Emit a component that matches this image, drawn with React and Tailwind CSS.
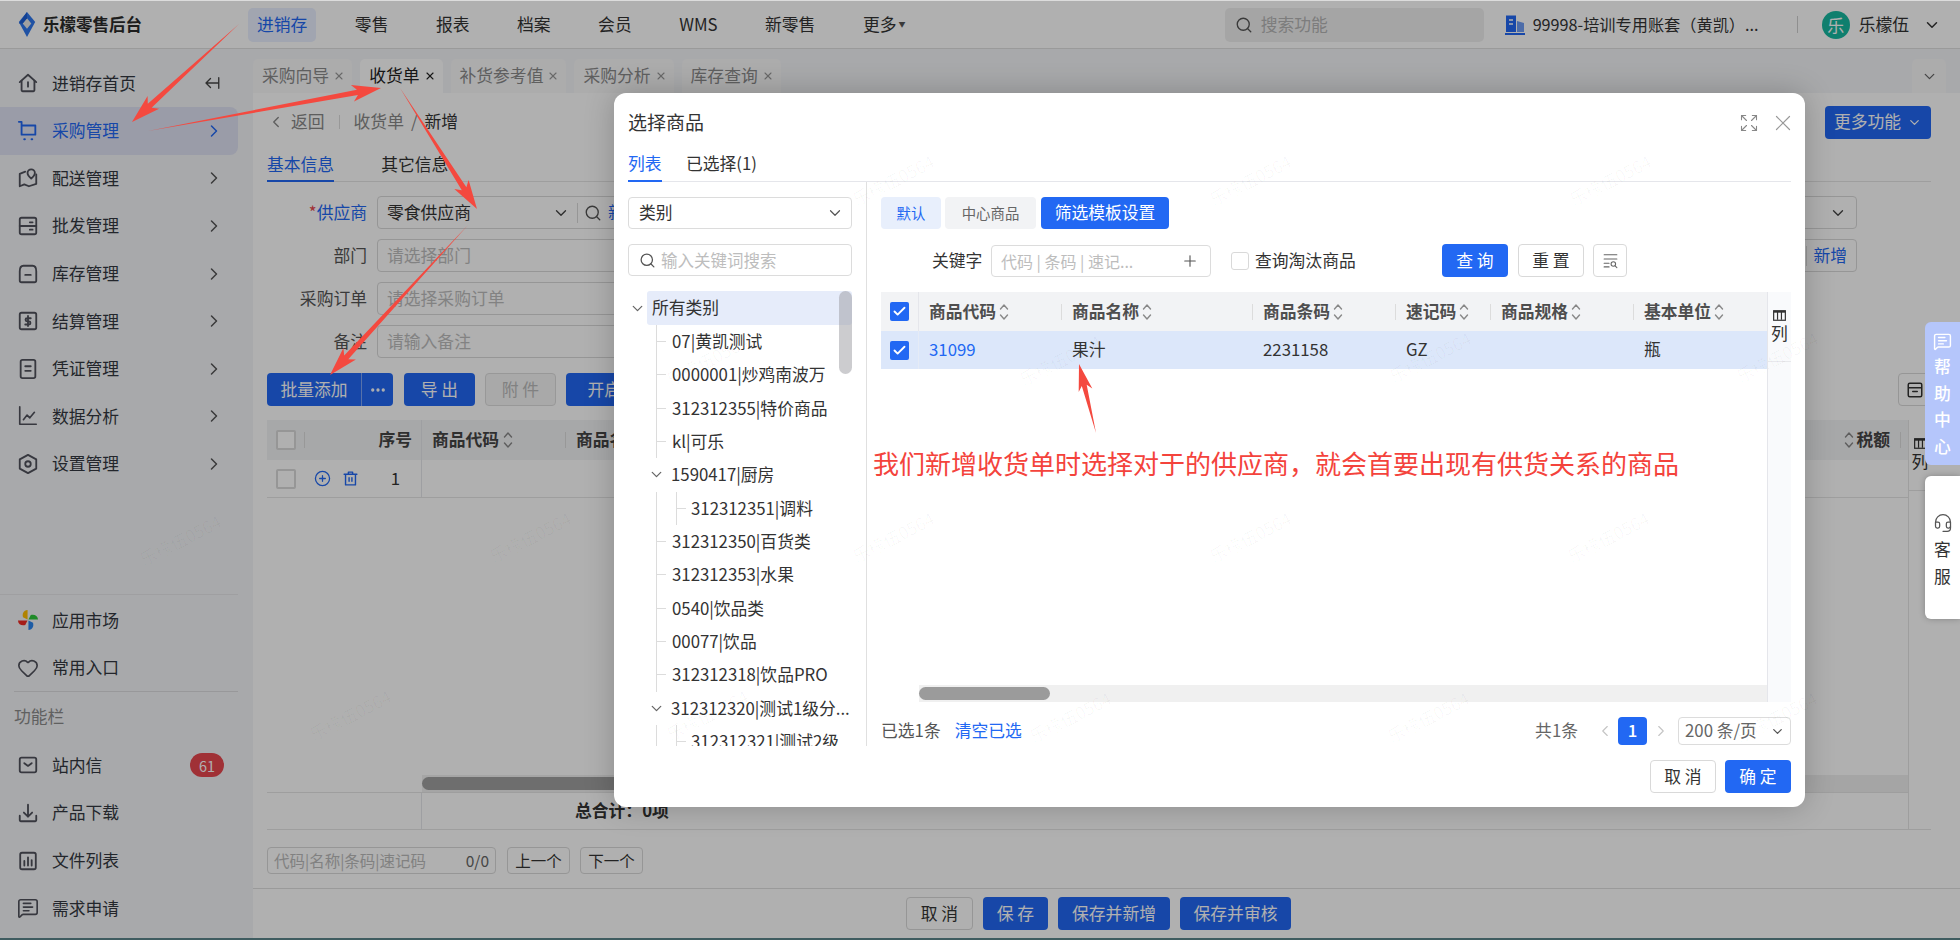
import React from "react";
import { Check, X, ChevronDown, ChevronRight, ChevronLeft, Search, Plus, Heart, Expand, CirclePlus, Headset, MessageSquareText, Ellipsis } from "lucide-react";

const FONT = { fontFamily: '"Noto Sans CJK SC", sans-serif' };

function Svg({ children, className = "", sw = 2, vb = "0 0 24 24" }) {
  return (
    <svg viewBox={vb} fill="none" stroke="currentColor" strokeWidth={sw} strokeLinecap="round" strokeLinejoin="round" className={className}>
      {children}
    </svg>
  );
}
const cls = "w-[22px] h-[22px]";
const HomeI = () => <Svg className={cls}><path d="M3 11 12 3l9 8" /><path d="M5 9.5V20a1 1 0 0 0 1 1h12a1 1 0 0 0 1-1V9.5" /><path d="M12 11v5" /></Svg>;
const CartI = () => <Svg className={cls}><path d="M2 2h3v14h15V6H5" /><path d="M8 21h.5M16 21h.5" strokeWidth="2.4" /></Svg>;
const MapI = () => <Svg className={cls}><path d="M9 5 3 7.5V21l5-2 5 2 8-2.5V8" /><path d="M15.5 2.5a4 4 0 0 1 4 4c0 2.5-4 6-4 6s-4-3.5-4-6a4 4 0 0 1 4-4z" /></Svg>;
const WholesaleI = () => <Svg className={cls}><rect x="3" y="3" width="18" height="18" rx="2" /><path d="M3 12h18M14 8h3M14 16h3" /></Svg>;
const StockI = () => <Svg className={cls}><path d="M3 9c0-3 1-6 4-6h10c3 0 4 3 4 6v10a2 2 0 0 1-2 2H5a2 2 0 0 1-2-2z" /><path d="M9 13h6" /></Svg>;
const MoneyI = () => <Svg className={cls}><rect x="3" y="3" width="18" height="18" rx="2" /><path d="M12 6.5v11M15 9h-4a1.7 1.7 0 0 0 0 3.4h2a1.7 1.7 0 0 1 0 3.4H9" /></Svg>;
const VoucherI = () => <Svg className={cls}><rect x="4" y="2" width="16" height="20" rx="2" /><path d="M9 9h6M9 14h6" /></Svg>;
const ChartI = () => <Svg className={cls} sw={1.8}><path d="M3 2v19h18" /><path d="m7 16 4-5 3 3 5-6" /></Svg>;
const SetI = () => <Svg className={cls}><path d="m12 2 9 5v10l-9 5-9-5V7z" /><circle cx="12" cy="12" r="3" /></Svg>;
const MailI = () => <Svg className={cls}><rect x="3" y="4" width="18" height="16" rx="2" /><path d="m8 10 4 3 4-3" /></Svg>;
const DownI = () => <Svg className={cls}><path d="M3 15v5a1 1 0 0 0 1 1h16a1 1 0 0 0 1-1v-5" /><path d="M12 3v13M7.5 11.5 12 16l4.500-4.500" /></Svg>;
const FileI = () => <Svg className={cls}><rect x="3.500" y="3" width="17" height="18" rx="2" /><path d="M8 12v5M12 8v9M16 11v6" /></Svg>;
const Pinwheel = () => (
  <svg viewBox="0 0 24 24" className={cls}>
    <path d="M11.500 11.500V1C7 1.500 5.500 5 6.500 9z" fill="#ffbe00" />
    <path d="M12.500 11.500H23C22.500 7 19 5.500 15 6.500z" fill="#2ec93a" />
    <path d="M12.500 12.500V23C17 22.500 18.500 19 17.500 15z" fill="#2b86f0" />
    <path d="M11.500 12.500H1C1.500 17 5 18.500 9 17.500z" fill="#f02b25" />
  </svg>
);

function Logo() {
  return (
    <svg viewBox="0 0 18 26" className="w-[18px] h-[25px] shrink-0">
      <path d="M9 0 17.500 10.500 9 26 .5 10.500z" fill="#2f78ee" />
      <path d="M9 6.500 13.500 12 9 17.500 4.500 12z" fill="#e8e8e8" />
      <path d="M9 0 9 6.500 4.500 12H.5z" fill="#1d5fd6" />
    </svg>
  );
}

function SortI({ className = "" }) {
  return (
    <svg viewBox="0 0 10 18" className={`w-[10px] h-[18px] shrink-0 ${className}`} fill="none" stroke="currentColor" strokeWidth="1.400" strokeLinecap="round" strokeLinejoin="round">
      <path d="M1.500 6 5 2l3.500 4M1.500 12 5 16l3.500-4" />
    </svg>
  );
}

function ColsI({ className = "" }) {
  return (
    <svg viewBox="0 0 12 10" className={`w-[13px] h-[11px] ${className}`} fill="none" stroke="currentColor" strokeWidth="1.100">
      <rect x=".6" y=".6" width="10.800" height="8.800" />
      <path d="M.6 1.500h10.800" strokeWidth="1.800" />
      <path d="M4.200 1v8M7.800 1v8" />
    </svg>
  );
}

function arrowPoints(x1, y1, x2, y2, neck = 5.5, head = 17, len = 26) {
  const L = Math.hypot(x2 - x1, y2 - y1);
  const dx = (x2 - x1) / L, dy = (y2 - y1) / L;
  const nx = -dy, ny = dx;
  const bx = x2 - dx * len, by = y2 - dy * len;
  const back = 3;
  const p = [
    [x1, y1],
    [bx + nx * neck / 2 + dx * 2, by + ny * neck / 2 + dy * 2],
    [bx + nx * head / 2 - dx * back, by + ny * head / 2 - dy * back],
    [x2, y2],
    [bx - nx * head / 2 - dx * back, by - ny * head / 2 - dy * back],
    [bx - nx * neck / 2 + dx * 2, by - ny * neck / 2 + dy * 2],
  ];
  return p.map((q) => q.map((v) => v.toFixed(1)).join(",")).join(" ");
}

const ARROWS = [
  [239, 24, 132, 122],
  [148, 131, 381, 88],
  [400, 88, 477, 209],
  [468, 225, 330, 375],
  [1096, 433, 1079, 364],
];

const MARKS = [
  [893, 180], [1250, 180], [1610, 180],
  [707, 360], [1060, 360], [1430, 357], [1777, 357],
  [180, 540], [530, 537], [893, 537], [1250, 537], [1608, 537],
  [350, 715], [707, 715], [1070, 717], [1428, 717], [1776, 717],
];

const NAV = ["零售", "报表", "档案", "会员", "WMS", "新零售"];

const SIDE = [
  [HomeI, "进销存首页"],
  [CartI, "采购管理"],
  [MapI, "配送管理"],
  [WholesaleI, "批发管理"],
  [StockI, "库存管理"],
  [MoneyI, "结算管理"],
  [VoucherI, "凭证管理"],
  [ChartI, "数据分析"],
  [SetI, "设置管理"],
];

function SideItem({ icon: I, label, active, chevron, right }) {
  return (
    <div className={`flex items-center h-[47.600px] w-[238px] pl-[17px] pr-[14px] rounded-r-[8px] ${active ? "bg-[#dfe3f3] text-[#2268f3]" : "text-[#333840]"}`}>
      <span className={active ? "text-[#2268f3]" : "text-[#50525c]"}><I /></span>
      <span className="ml-[13px] text-[16.800px]">{label}</span>
      <span className="ml-auto flex items-center">
        {chevron && <ChevronRight className={`w-[20px] h-[20px] ${active ? "text-[#2268f3]" : "text-[#555]"}`} strokeWidth={1.800} />}
        {right}
      </span>
    </div>
  );
}

function Sidebar() {
  return (
    <aside className="w-[253px] shrink-0 bg-[#f4f5f8] flex flex-col pt-[10.500px]">
      {SIDE.map(([I, label], i) => (
        <SideItem
          key={label}
          icon={I}
          label={label}
          active={i === 1}
          chevron={i > 0}
          right={i === 0 ? (
            <Svg className="w-[18px] h-[18px] text-[#444] mr-[3px]" sw={1.800}><path d="M21 12H5M10 6l-6 6 6 6M21 5v14" /></Svg>
          ) : null}
        />
      ))}
      <div className="mt-auto w-[238px] border-t border-[#e6e7ea]" />
      <div className="pt-[1px]">
        <SideItem icon={Pinwheel} label="应用市场" />
        <SideItem icon={() => <Heart className={cls} strokeWidth={1.800} />} label="常用入口" />
      </div>
      <div className="ml-[14px] w-[224px] border-t border-[#dcdde0] mt-[-1px]" />
      <div className="h-[50px] pl-[14px] flex items-center text-[16.800px] text-[#8c8c8c]">功能栏</div>
      <SideItem
        icon={MailI}
        label="站内信"
        right={<span className="w-[34px] h-[24px] rounded-full bg-[#e8474f] text-white text-[14.400px] flex items-center justify-center">61</span>}
      />
      <SideItem icon={DownI} label="产品下载" />
      <SideItem icon={FileI} label="文件列表" />
      <SideItem icon={() => <MessageSquareText className={cls} strokeWidth={1.800} />} label="需求申请" />
      <div className="h-[6px]" />
    </aside>
  );
}

function Header() {
  return (
    <header className="h-[48px] shrink-0 flex items-center bg-white border-b border-[#dfdfdf] text-[16.800px] text-[#333]">
      <div className="w-[248px] shrink-0 flex items-center pl-[18px] gap-[7px]">
        <Logo />
        <span className="font-bold text-[16.500px] text-[#2b2b2b]">乐檬零售后台</span>
      </div>
      <nav className="flex items-center gap-[29.500px]">
        <span className="h-[34px] px-[9px] rounded-[5px] bg-[#e9efff] text-[#2268f3] flex items-center">进销存</span>
        {NAV.map((n) => (
          <span key={n} className="px-[9px]">{n}</span>
        ))}
        <span className="pl-[9px] flex items-center gap-[2px]">更多<span className="text-[7px] text-[#555]">▼</span></span>
      </nav>
      <div className="ml-auto flex items-center pr-[19px]">
        <div className="w-[259px] h-[34px] rounded-[5px] bg-[#f0f0f0] flex items-center pl-[10px] text-[#b5b5b5]">
          <Search className="w-[18px] h-[18px] text-[#555]" strokeWidth={1.800} />
          <span className="ml-[8px]">搜索功能</span>
        </div>
        <svg viewBox="0 0 22 22" className="ml-[20px] w-[22px] h-[22px]">
          <path d="M2 1.500h10V18H2z" fill="#2268f3" />
          <path d="M13 7l7 2v9h-7z" fill="#6f9df5" />
          <path d="M1 19h20v2H1z" fill="#2268f3" />
          <path d="M5 6h4M5 10h4" stroke="#fff" strokeWidth="1.500" />
        </svg>
        <span className="ml-[7px] w-[232px] whitespace-nowrap overflow-hidden text-[16.200px]">99998-培训专用账套（黄凯）...</span>
        <span className="ml-[32px] w-px h-[17px] bg-[#d0d0d0]" />
        <span className="ml-[24px] w-[28px] h-[28px] rounded-full bg-[#17b8a0] text-white flex items-center justify-center text-[17px]">乐</span>
        <span className="ml-[9px]">乐檬伍</span>
        <ChevronDown className="ml-[14px] w-[18px] h-[18px] text-[#333]" strokeWidth={2} />
      </div>
    </header>
  );
}

function TabItem({ label, active }) {
  return (
    <div className={`h-full flex items-center pl-[9px] pr-[7px] gap-[4px] rounded-t-[5px] ${active ? "bg-white text-[#222]" : "bg-[#f9f9fa] text-[#8a8a8a]"}`}>
      <span>{label}</span>
      <X className={`w-[12px] h-[12px] ${active ? "text-[#222]" : "text-[#999]"}`} strokeWidth={2.200} />
    </div>
  );
}

function Field({ label, children, required, blue }) {
  return (
    <div className="flex items-center">
      <label className={`w-[100px] text-right mr-[10px] ${blue ? "text-[#2268f3]" : "text-[#555]"}`}>
        {required && <span className="text-[#e8474f]">*</span>}
        {label}
      </label>
      {children}
    </div>
  );
}

function Input({ placeholder, children, className = "w-[430px]" }) {
  return (
    <div className={`h-[33px] border border-[#d9d9d9] rounded-[4px] bg-white flex items-center px-[9px] ${className}`}>
      {placeholder && <span className="text-[#bdbdbd]">{placeholder}</span>}
      {children}
    </div>
  );
}

function Btn({ children, className = "" }) {
  return <button className={`h-[33px] rounded-[4px] flex items-center justify-center ${className}`}>{children}</button>;
}

function PageBody() {
  return (
    <main className="flex-1 min-w-0 flex flex-col bg-white text-[16.800px]">
      <div className="h-[44px] shrink-0 bg-[#f4f5f8] pt-[10px] flex gap-[8px] relative">
        <TabItem label="采购向导" />
        <TabItem label="收货单" active />
        <TabItem label="补货参考值" />
        <TabItem label="采购分析" />
        <TabItem label="库存查询" />
        <div className="ml-auto mr-[14px] w-[34px] bg-[#f9f9fa] rounded-t-[5px] flex items-center justify-center">
          <ChevronDown className="w-[17px] h-[17px] text-[#666]" strokeWidth={1.800} />
        </div>
      </div>

      <div className="flex-1 min-h-0 flex flex-col pl-[14px] pr-[29px]">
        <div className="h-[58px] shrink-0 flex items-center text-[#888]">
          <ChevronLeft className="w-[18px] h-[18px] mr-[6px]" strokeWidth={1.800} />
          <span>返回</span>
          <span className="mx-[14px] w-px h-[14px] bg-[#ddd]" />
          <span>收货单</span>
          <span className="mx-[7px]">/</span>
          <span className="text-[#333]">新增</span>
          <Btn className="ml-auto w-[106px] h-[28px] bg-[#2268f3] text-white gap-[6px]">更多功能<ChevronDown className="w-[15px] h-[15px]" /></Btn>
        </div>
        <div className="h-[31px] shrink-0 flex border-b border-[#e5e5e5]">
          <span className="text-[#2268f3] border-b-2 border-[#2268f3] h-[31px] leading-[26px] whitespace-nowrap">基本信息</span>
          <span className="ml-[47px] text-[#333] leading-[26px] whitespace-nowrap">其它信息</span>
        </div>

        <div className="mt-[14px] flex flex-col gap-[10px]">
          <div className="flex justify-between w-[1590px]">
            <Field label="供应商" required blue>
              <Input>
                <span className="text-[#333] whitespace-nowrap">零食供应商</span>
                <ChevronDown className="ml-[81px] w-[18px] h-[18px] text-[#444]" strokeWidth={1.800} />
                <span className="ml-[7px] w-px h-[20px] bg-[#d9d9d9]" />
                <Search className="ml-[6px] w-[18px] h-[18px] text-[#555]" strokeWidth={1.800} />
                <span className="ml-[6px] text-[#2268f3] whitespace-nowrap">新增</span>
              </Input>
            </Field>
            <Field label="仓库">
              <Input className="w-[380px] justify-end"><ChevronDown className="w-[18px] h-[18px] text-[#444]" strokeWidth={1.800} /></Input>
            </Field>
          </div>
          <div className="flex justify-between w-[1590px]">
            <Field label="部门"><Input placeholder="请选择部门" /></Field>
            <Field label="业务员">
              <Input className="w-[380px] justify-end">
                <span className="w-px h-[20px] bg-[#d9d9d9] mr-[6px]" />
                <span className="text-[#2268f3] whitespace-nowrap">新增</span>
              </Input>
            </Field>
          </div>
          <Field label="采购订单"><Input placeholder="请选择采购订单" /></Field>
          <Field label="备注"><Input placeholder="请输入备注" /></Field>
        </div>

        <div className="mt-[15px] h-[33px] shrink-0 flex items-center">
          <div className="flex bg-[#2268f3] rounded-[4px] text-white h-[33px] items-center">
            <span className="w-[94px] text-center">批量添加</span>
            <span className="w-px h-full bg-[#7ea6f7]" />
            <span className="w-[31px] flex justify-center"><Ellipsis className="w-[18px] h-[18px]" strokeWidth={2.400} /></span>
          </div>
          <Btn className="ml-[11px] w-[71px] bg-[#2268f3] text-white">导 出</Btn>
          <Btn className="ml-[10px] w-[71px] border border-[#ddd] bg-[#f5f5f5] text-[#bbb]">附 件</Btn>
          <Btn className="ml-[10px] w-[110px] bg-[#2268f3] text-white">开启扫码</Btn>
          <Btn className="ml-auto w-[33px] border border-[#d9d9d9] bg-white text-[#333]">
            <Svg className="w-[18px] h-[18px]" sw={2}><path d="M3 9V5a2 2 0 0 1 2-2h14a2 2 0 0 1 2 2v4M3 9v10a2 2 0 0 0 2 2h14a2 2 0 0 0 2-2V9zM9 14h6" /></Svg>
          </Btn>
        </div>

        <div className="mt-[14px] h-[410px] shrink-0 flex">
          <div className="flex-1 min-w-0 flex flex-col">
            <div className="h-[40px] shrink-0 bg-[#f2f3f5] flex items-center font-bold text-[#444]">
              <div className="w-[155px] h-full shrink-0 flex items-center pl-[9px] border-r border-[#e5e6eb]">
                <span className="w-[20px] h-[20px] border-2 border-[#d9d9d9] rounded-[2px] bg-white" />
                <span className="ml-[8px] w-px h-[16px] bg-[#ddd]" />
                <span className="ml-auto mr-[9px]">序号</span>
              </div>
              <div className="w-[143px] pl-[10px] flex items-center gap-[4px]">商品代码<SortI className="text-[#888]" /></div>
              <span className="w-px h-[16px] bg-[#ddd]" />
              <span className="ml-[10px]">商品名称</span>
              <div className="ml-auto flex items-center gap-[2px]">
                <SortI className="text-[#888]" />
                <span>税额</span>
                <span className="ml-[8px] w-px h-[16px] bg-[#ddd] mr-[7px]" />
              </div>
            </div>
            <div className="h-[38px] shrink-0 flex items-center border-b border-[#e5e5e5]">
              <div className="w-[155px] h-full shrink-0 flex items-center pl-[9px] border-r border-[#e5e6eb]">
                <span className="w-[20px] h-[20px] border-2 border-[#d9d9d9] rounded-[2px] bg-white" />
                <CirclePlus className="ml-[18px] w-[17px] h-[17px] text-[#2268f3]" strokeWidth={1.800} />
                <Svg className="ml-[11px] w-[17px] h-[17px] text-[#2268f3]"><path d="M3 6h18M9 6V3h6v3M5 6v15h14V6M10 11v5M14 11v5" /></Svg>
                <span className="ml-auto mr-[21px] text-[#333] font-normal">1</span>
              </div>
            </div>
            <div className="flex-1" />
            <div className="h-[17px] shrink-0 ml-[155px] bg-[#f0f0f0] flex items-center">
              <span className="w-[290px] h-[13px] rounded-full bg-[#a0a0a0]" />
            </div>
            <div className="h-[38px] shrink-0 flex items-center border-y border-[#e5e5e5] font-bold text-[#333]">
              <div className="w-[155px] h-full border-r border-[#e5e6eb]" />
              <span className="ml-[153px]">总合计：0项</span>
            </div>
          </div>
          <div className="w-[23px] shrink-0 border-l border-[#e5e5e5] border-b flex flex-col items-center text-[#333]">
            <div className="h-[71px] w-full flex flex-col items-center border-b border-[#e5e5e5] pt-[18px]">
              <ColsI />
              <span className="leading-[24px]">列</span>
            </div>
          </div>
        </div>

        <div className="mt-[17px] flex items-center h-[27px] shrink-0 text-[15.500px]">
          <div className="w-[229px] h-full border border-[#d9d9d9] rounded-[4px] flex items-center justify-between px-[6px]">
            <span className="text-[#bbb]">代码|名称|条码|速记码</span>
            <span className="text-[#666]">0/0</span>
          </div>
          <span className="ml-[11px] w-[63px] h-full border border-[#d9d9d9] rounded-[4px] flex items-center justify-center text-[#333]">上一个</span>
          <span className="ml-[10px] w-[63px] h-full border border-[#d9d9d9] rounded-[4px] flex items-center justify-center text-[#333]">下一个</span>
        </div>
      </div>

      <footer className="h-[50px] shrink-0 border-t border-[#e0e0e0] flex items-center pl-[653px] gap-[10px]">
        <Btn className="w-[67px] border border-[#d9d9d9] bg-white text-[#333]">取 消</Btn>
        <Btn className="w-[65px] bg-[#2268f3] text-white">保 存</Btn>
        <Btn className="w-[112px] bg-[#2268f3] text-white">保存并新增</Btn>
        <Btn className="w-[111px] bg-[#2268f3] text-white">保存并审核</Btn>
      </footer>
    </main>
  );
}

const COLS = [
  ["商品代码", 143],
  ["商品名称", 191],
  ["商品条码", 143],
  ["速记码", 95],
  ["商品规格", 143],
  ["基本单位", 134],
];
const ROW = ["31099", "果汁", "2231158", "GZ", "", "瓶"];

function Checked() {
  return (
    <span className="w-[19px] h-[19px] rounded-[2px] bg-[#2268f3] flex items-center justify-center">
      <Check className="w-[15px] h-[15px] text-white" strokeWidth={3} />
    </span>
  );
}

function Leaf({ children, nested }) {
  return (
    <div className={`h-[33.330px] flex items-center whitespace-nowrap ${nested ? "pl-[19px]" : ""}`}>
      {nested ? (
        <span className="relative w-[9px] h-[33.330px] shrink-0 border-l border-[#dcdcdc]">
          <span className="absolute left-0 top-[16px] w-[9px] h-px bg-[#dcdcdc]" />
        </span>
      ) : (
        <span className="w-[9px] h-px bg-[#dcdcdc] shrink-0" />
      )}
      <span className={nested ? "ml-[6px]" : "ml-[6px]"}>{children}</span>
    </div>
  );
}

function Node({ children }) {
  return (
    <div className="h-[33.330px] flex items-center whitespace-nowrap -ml-[8px]">
      <ChevronDown className="w-[17px] h-[17px] text-[#666]" strokeWidth={1.800} />
      <span className="ml-[6px] overflow-hidden">{children}</span>
    </div>
  );
}

function Tree() {
  return (
    <div className="relative mt-[15px] h-[455px] overflow-hidden text-[16.800px] text-[#333]">
      <div className="flex items-center h-[34px]">
        <ChevronDown className="ml-[1px] w-[17px] h-[17px] text-[#666]" strokeWidth={1.800} />
        <span className="ml-[1px] flex-1 h-full rounded-[3px] bg-[#e6ecfa] pl-[5px] flex items-center">所有类别</span>
      </div>
      <div className="ml-[28px]">
        <div className="border-l border-[#dcdcdc]">
          <Leaf>07|黄凯测试</Leaf>
          <Leaf>0000001|炒鸡南波万</Leaf>
          <Leaf>312312355|特价商品</Leaf>
          <Leaf>kl|可乐</Leaf>
        </div>
        <Node>1590417|厨房</Node>
        <div className="border-l border-[#dcdcdc]">
          <Leaf nested>312312351|调料</Leaf>
          <Leaf>312312350|百货类</Leaf>
          <Leaf>312312353|水果</Leaf>
          <Leaf>0540|饮品类</Leaf>
          <Leaf>00077|饮品</Leaf>
          <Leaf>312312318|饮品PRO</Leaf>
        </div>
        <Node>312312320|测试1级分...</Node>
        <div className="border-l border-[#dcdcdc]">
          <Leaf nested>312312321|测试2级</Leaf>
        </div>
      </div>
      <span className="absolute right-0 top-0 w-[13px] h-[83px] rounded-full bg-[#9a9aa0]/50" />
    </div>
  );
}

function Modal() {
  return (
    <div className="absolute left-[614px] top-[93px] w-[1191px] h-[714px] bg-white rounded-[12px] shadow-[0_0_30px_rgba(0,0,0,0.22)] px-[14px] flex flex-col text-[16.800px] text-[#333]">
      <div className="h-[59px] shrink-0 flex items-center">
        <span className="text-[19px] text-[#333]">选择商品</span>
        <Expand className="ml-auto w-[20px] h-[20px] text-[#888]" strokeWidth={1.300} />
        <X className="ml-[11px] -mr-[5px] w-[26px] h-[26px] text-[#999]" strokeWidth={1.100} />
      </div>
      <div className="h-[30px] shrink-0 flex border-b border-[#e5e6eb]">
        <span className="w-[34px] h-[30px] border-b-2 border-[#2268f3] text-[#2268f3] leading-[23px] whitespace-nowrap">列表</span>
        <span className="ml-[24px] leading-[23px]">已选择(1)</span>
      </div>
      <div className="flex-1 min-h-0 flex">
        <div className="w-[239px] shrink-0 border-r border-[#e0e0e0] pr-[14px] pt-[15px] flex flex-col">
          <div className="h-[32px] border border-[#dcdcdc] rounded-[4px] flex items-center justify-between pl-[10px] pr-[7px]">
            <span>类别</span>
            <ChevronDown className="w-[18px] h-[18px] text-[#555]" strokeWidth={1.600} />
          </div>
          <div className="mt-[15px] h-[32px] border border-[#dcdcdc] rounded-[4px] flex items-center pl-[10px]">
            <Search className="w-[17px] h-[17px] text-[#555]" strokeWidth={1.800} />
            <span className="ml-[5px] text-[#bdbdbd] text-[16.500px]">输入关键词搜索</span>
          </div>
          <Tree />
        </div>

        <div className="flex-1 min-w-0 pl-[14px] pt-[15px] flex flex-col">
          <div className="h-[32px] flex items-center gap-[4px] text-[14.400px]">
            <span className="w-[60px] h-full rounded-[4px] bg-[#e8effc] text-[#2268f3] flex items-center justify-center">默认</span>
            <span className="w-[91px] h-full rounded-[4px] bg-[#f2f3f5] text-[#666] flex items-center justify-center">中心商品</span>
            <span className="w-[128px] h-full rounded-[4px] bg-[#2268f3] text-white text-[16.800px] flex items-center justify-center ml-[1px]">筛选模板设置</span>
          </div>
          <div className="mt-[15px] h-[33px] flex items-center">
            <span className="ml-[51px] w-[50px] whitespace-nowrap">关键字</span>
            <div className="ml-[9px] w-[220px] h-[32px] border border-[#dcdcdc] rounded-[4px] flex items-center justify-between pl-[9px] pr-[11px]">
              <span className="text-[#bdbdbd] text-[16px] whitespace-nowrap">代码 | 条码 | 速记...</span>
              <Plus className="w-[18px] h-[18px] text-[#555]" strokeWidth={1.500} />
            </div>
            <span className="ml-[20px] w-[18px] h-[18px] border border-[#d9d9d9] rounded-[3px]" />
            <span className="ml-[6px] w-[100px] whitespace-nowrap">查询淘汰商品</span>
            <Btn className="ml-[87px] w-[66px] bg-[#2268f3] text-white">查 询</Btn>
            <Btn className="ml-[10px] w-[66px] border border-[#d9d9d9]">重 置</Btn>
            <Btn className="ml-[9px] w-[34px] border border-[#d9d9d9] text-[#666]">
              <Svg className="w-[17px] h-[17px]" sw={1.500}><path d="M3 4h18M3 10h18M3 16h7M3 21h7" /><circle cx="16" cy="17" r="3.200" /><path d="m18.500 19.500 2.500 2.500" /></Svg>
            </Btn>
          </div>

          <div className="mt-[15px] h-[410px] shrink-0 flex">
            <div className="w-[886px] shrink-0 flex flex-col">
              <div className="h-[39px] shrink-0 bg-[#f2f3f5] flex items-center font-bold text-[#4e4e4e]">
                <div className="w-[38px] h-full flex items-center pl-[9px] border-r border-[#e5e6eb] shrink-0"><Checked /></div>
                {COLS.map(([c, w], i) => (
                  <div key={c} className="flex items-center h-full shrink-0" style={{ width: i === 0 ? w - 1 : w }}>
                    {i > 0 && <span className="w-px h-[16px] bg-[#dcdcdc] mr-[10px]" />}
                    <span className={i === 0 ? "ml-[10px]" : ""}>{c}</span>
                    <SortI className="ml-[3px] text-[#888]" />
                  </div>
                ))}
              </div>
              <div className="h-[38px] shrink-0 bg-[#dce7fa] flex items-center">
                <div className="w-[38px] h-full flex items-center pl-[9px] border-r border-[#e5ebf6] shrink-0"><Checked /></div>
                {ROW.map((v, i) => (
                  <div key={i} className={`shrink-0 ${i === 0 ? "pl-[10px] text-[#2268f3]" : "pl-[11px] text-[#333]"}`} style={{ width: i === 0 ? COLS[i][1] - 1 : COLS[i][1] }}>{v}</div>
                ))}
              </div>
              <div className="flex-1" />
              <div className="h-[17px] shrink-0 ml-[38px] bg-[#f0f0f0] flex items-center">
                <span className="w-[131px] h-[13px] rounded-full bg-[#9b9b9b]" />
              </div>
            </div>
            <div className="flex-1 bg-[#f9fafc] border-l border-[#e5e6eb] flex flex-col">
              <div className="h-[70px] w-full border-b border-[#e8e9ec] flex flex-col items-center pt-[18px]">
                <ColsI />
                <span className="leading-[24px]">列</span>
              </div>
            </div>
          </div>

          <div className="mt-[15px] h-[28px] flex items-center text-[#555]">
            <span>已选1条</span>
            <span className="ml-[14px] text-[#2268f3]">清空已选</span>
            <span className="ml-auto text-[#666]">共1条</span>
            <ChevronLeft className="ml-[18px] w-[18px] h-[18px] text-[#c4c4c4]" strokeWidth={1.500} />
            <span className="ml-[4px] w-[29px] h-full rounded-[4px] bg-[#2268f3] text-white flex items-center justify-center font-medium">1</span>
            <ChevronRight className="ml-[5px] w-[18px] h-[18px] text-[#c4c4c4]" strokeWidth={1.500} />
            <div className="ml-[8px] w-[113px] h-full border border-[#dcdcdc] rounded-[4px] flex items-center justify-between pl-[6px] pr-[5px] text-[#666] whitespace-nowrap">
              <span>200 条/页</span>
              <ChevronDown className="w-[15px] h-[15px] text-[#555]" strokeWidth={2} />
            </div>
          </div>
        </div>
      </div>
      <div className="mt-[14px] mb-[14px] flex justify-end gap-[9px]">
        <Btn className="w-[66px] border border-[#d9d9d9]">取 消</Btn>
        <Btn className="w-[66px] bg-[#2268f3] text-white">确 定</Btn>
      </div>
    </div>
  );
}

function HelpDock() {
  return (
    <div className="absolute right-0 top-[322px] w-[35px] flex flex-col gap-[11px] text-[16.800px]">
      <div className="h-[143px] rounded-l-[6px] bg-[#b5c6fb] text-white flex flex-col items-center pt-[10px]">
        <MessageSquareText className="w-[19px] h-[19px]" strokeWidth={1.800} />
        <span className="mt-[2px] leading-[26.500px] text-center font-medium">帮<br />助<br />中<br />心</span>
      </div>
      <div className="h-[143px] rounded-l-[6px] bg-white shadow-[0_0_6px_rgba(0,0,0,0.25)] text-[#333] flex flex-col items-center pt-[37px]">
        <Headset className="w-[20px] h-[20px] text-[#555]" strokeWidth={1.500} />
        <span className="mt-[3px] leading-[26.500px] text-center">客<br />服</span>
      </div>
    </div>
  );
}

export default function App() {
  return (
    <div className="relative w-[1960px] h-[940px] overflow-hidden bg-white" style={FONT}>
      <div className="h-[938px] flex flex-col">
        <div className="h-px shrink-0 bg-[#dcdcdc]" />
        <Header />
        <div className="flex-1 min-h-0 flex">
          <Sidebar />
          <PageBody />
        </div>
      </div>
      <div className="h-[2px] bg-[#3f5c60]" />

      <div className="absolute left-0 right-0 top-px h-[937px] bg-black/[0.31]" />
      <Modal />
      <HelpDock />

      <div className="absolute inset-0 pointer-events-none">
        {MARKS.map(([x, y], i) => (
          <span
            key={i}
            className="absolute text-[17px] text-black/[0.03] -rotate-[27deg] whitespace-nowrap -translate-x-1/2 -translate-y-1/2"
            style={{ left: x, top: y }}
          >
            乐檬伍0564
          </span>
        ))}
      </div>

      <svg className="absolute inset-0 w-[1960px] h-[940px] pointer-events-none" viewBox="0 0 1960 940">
        {ARROWS.map((a, i) => (
          <polygon key={i} points={arrowPoints(...a, i === 4 ? 5 : 5.5, i === 4 ? 14 : 17, i === 4 ? 24 : 26)} fill="#f4493f" />
        ))}
      </svg>

      <div className="absolute left-[873px] top-[444px] text-[26px] leading-[38px] text-[#f4433c] whitespace-nowrap">
        我们新增收货单时选择对于的供应商，就会首要出现有供货关系的商品
      </div>
    </div>
  );
}
